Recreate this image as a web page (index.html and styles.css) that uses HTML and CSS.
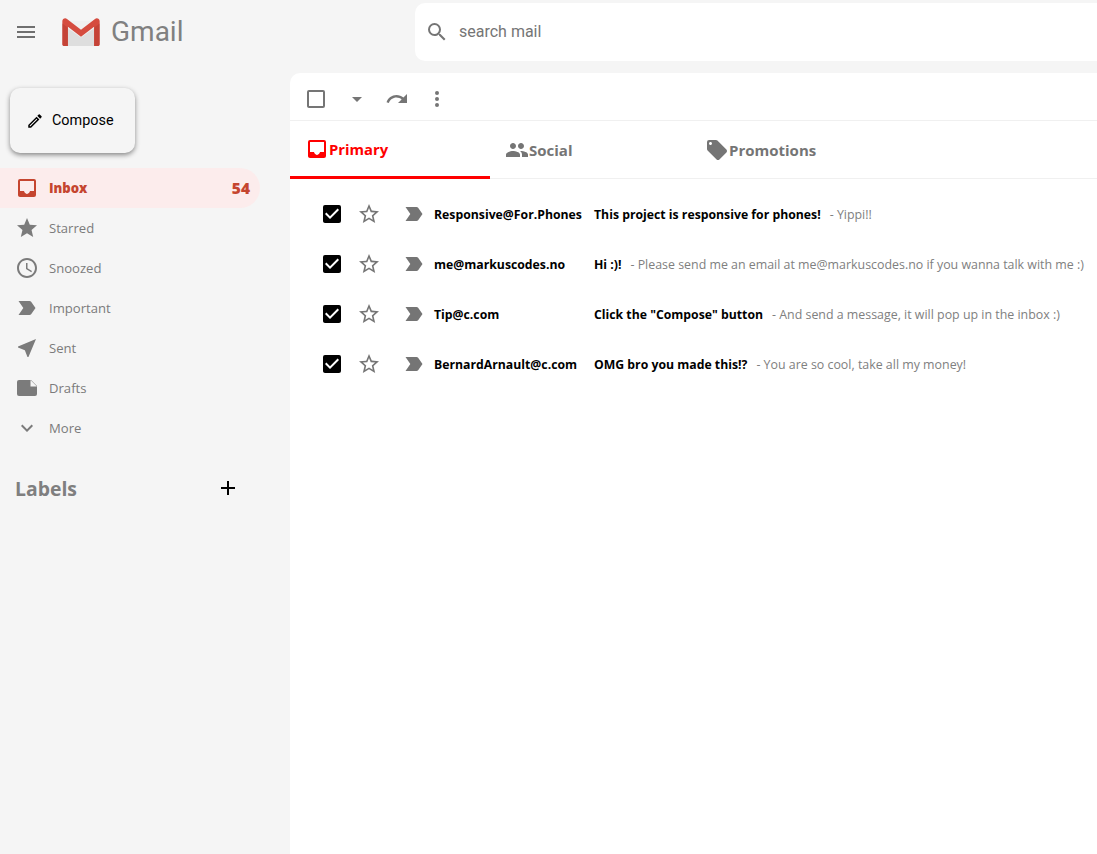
FILE: index.html
```html
<!DOCTYPE html>
<html lang="en">
<head>
<meta charset="UTF-8">
<meta name="viewport" content="width=device-width, initial-scale=1.0">
<title>Gmail</title>
<link rel="stylesheet" href="styles.css">
</head>
<body>
<header class="topbar">
    <div class="brand">
        <svg class="menu-icon" viewBox="0 0 24 24"><path d="M3 18h18v-2H3v2zm0-5h18v-2H3v2zm0-7v2h18V6H3z"/></svg>
        <svg class="logo" viewBox="0 0 40 30">
            <path fill="#f0f0f0" d="M4 3h32v27H4z"/>
            <path fill="#dedede" d="M6 30V11l14 10 14-10v19z"/>
            <path fill="#d54c3f" d="M0 3.500C0 .8 3-.6 5 1l15 11.500L35 1c2-1.600 5-.2 5 2.500V28c0 1.100-.9 2-2 2h-4V9.500L20 20 6 9.500V30H2c-1.100 0-2-.9-2-2z"/>
            <path fill="#b23a2e" d="M0 6l6 4.500V30H2c-1.100 0-2-.9-2-2zM40 6l-6 4.500V30h4c1.100 0 2-.9 2-2z" opacity=".45"/>
        </svg>
        <span class="logo-text">Gmail</span>
    </div>
    <div class="search">
        <svg class="search-icon" viewBox="0 0 24 24"><path d="M15.500 14h-.79l-.28-.27A6.470 6.470 0 0 0 16 9.500 6.500 6.500 0 1 0 9.500 16c1.610 0 3.090-.59 4.230-1.570l.27.28v.79l5 4.990L20.490 19l-4.990-5zm-6 0C7.010 14 5 11.990 5 9.500S7.010 5 9.500 5 14 7.010 14 9.500 11.990 14 9.500 14z"/></svg>
        <span class="search-text">search mail</span>
    </div>
</header>

<div class="layout">
    <aside class="sidebar">
        <button class="compose">
            <svg class="compose-icon" viewBox="0 0 24 24"><path d="M3 17.250V21h3.750L17.810 9.940l-3.750-3.750L3 17.250zM5.920 19H5v-.92l9.060-9.060.92.92L5.920 19zM20.710 5.630l-2.340-2.340a1 1 0 0 0-1.410 0l-1.830 1.830 3.750 3.750 1.830-1.830a1 1 0 0 0 0-1.410z"/></svg>
            <span class="compose-text">Compose</span>
        </button>
        <nav class="nav">
            <a class="nav-item active">
                <svg viewBox="0 0 24 24"><path d="M19 3H5a2 2 0 0 0-2 2v14c0 1.100.9 2 2 2h14a2 2 0 0 0 2-2V5a2 2 0 0 0-2-2zm0 12h-4c0 1.660-1.350 3-3 3s-3-1.340-3-3H5V5h14v10z"/><path d="M5 15h4c0 1.660 1.350 3 3 3s3-1.340 3-3h4v4H5z"/></svg>
                <span class="nav-label">Inbox</span>
                <span class="nav-count">54</span>
            </a>
            <a class="nav-item">
                <svg viewBox="0 0 24 24"><path d="M12 17.270L18.180 21l-1.640-7.030L22 9.240l-7.190-.61L12 2 9.190 8.630 2 9.240l5.460 4.730L5.820 21z"/></svg>
                <span class="nav-label">Starred</span>
            </a>
            <a class="nav-item">
                <svg viewBox="0 0 24 24"><path d="M11.990 2C6.470 2 2 6.480 2 12s4.470 10 9.990 10C17.520 22 22 17.520 22 12S17.520 2 11.990 2zM12 20c-4.420 0-8-3.580-8-8s3.580-8 8-8 8 3.580 8 8-3.580 8-8 8zm.5-13H11v6l5.250 3.150.75-1.230-4.500-2.670z"/></svg>
                <span class="nav-label">Snoozed</span>
            </a>
            <a class="nav-item">
                <svg viewBox="0 0 24 24"><path d="M3.500 18.990l11 .01c.67 0 1.270-.33 1.630-.84L20.500 12l-4.370-6.160A2 2 0 0 0 14.500 5l-11 .01L8.340 12 3.500 18.990z"/></svg>
                <span class="nav-label">Important</span>
            </a>
            <a class="nav-item">
                <svg viewBox="0 0 24 24"><path d="M21 3L3 10.530v.98l6.840 2.650L12.480 21h.98L21 3z"/></svg>
                <span class="nav-label">Sent</span>
            </a>
            <a class="nav-item">
                <svg viewBox="0 0 24 24"><path d="M4 4h12l6 6v8a2 2 0 0 1-2 2H4a2 2 0 0 1-2-2V6a2 2 0 0 1 2-2z"/><path fill="#f5f5f5" d="M15.500 4l6.500 6.500h-6.500z"/></svg>
                <span class="nav-label">Drafts</span>
            </a>
            <a class="nav-item">
                <svg viewBox="0 0 24 24"><path d="M16.590 8.590L12 13.170 7.410 8.590 6 10l6 6 6-6z"/></svg>
                <span class="nav-label">More</span>
            </a>
        </nav>
        <div class="labels">
            <h3>Labels</h3>
            <svg class="plus-icon" viewBox="0 0 24 24"><path d="M19 13h-6v6h-2v-6H5v-2h6V5h2v6h6v2z"/></svg>
        </div>
    </aside>

    <main class="mail">
        <div class="toolbar">
            <svg class="tool-box" viewBox="0 0 24 24"><path d="M19 5v14H5V5h14m0-2H5a2 2 0 0 0-2 2v14c0 1.100.9 2 2 2h14a2 2 0 0 0 2-2V5a2 2 0 0 0-2-2z"/></svg>
            <svg class="tool-arrow" viewBox="0 0 24 24"><path d="M7 10l5 5 5-5z"/></svg>
            <svg class="tool-redo" viewBox="0 0 24 24"><path d="M18.400 10.600C16.550 8.990 14.150 8 11.500 8c-4.650 0-8.580 3.030-9.960 7.220L3.900 16c1.050-3.190 4.050-5.500 7.600-5.500 1.950 0 3.730.72 5.120 1.880L13 16h9V7l-3.600 3.600z"/></svg>
            <svg class="tool-more" viewBox="0 0 24 24"><path d="M12 8a2 2 0 1 0 0-4 2 2 0 0 0 0 4zm0 2a2 2 0 1 0 0 4 2 2 0 0 0 0-4zm0 6a2 2 0 1 0 0 4 2 2 0 0 0 0-4z"/></svg>
        </div>

        <div class="tabs">
            <div class="tab active">
                <svg viewBox="0 0 24 24"><path d="M19 3H5a2 2 0 0 0-2 2v14c0 1.100.9 2 2 2h14a2 2 0 0 0 2-2V5a2 2 0 0 0-2-2zm0 12h-4c0 1.660-1.350 3-3 3s-3-1.340-3-3H5V5h14v10z"/><path d="M5 15h4c0 1.660 1.350 3 3 3s3-1.340 3-3h4v4H5z"/></svg>
                Primary
            </div>
            <div class="tab">
                <svg viewBox="0 0 24 24"><path d="M16 11c1.660 0 2.990-1.340 2.990-3S17.660 5 16 5c-1.660 0-3 1.340-3 3s1.340 3 3 3zm-8 0c1.660 0 2.990-1.340 2.990-3S9.660 5 8 5C6.340 5 5 6.340 5 8s1.340 3 3 3zm0 2c-2.330 0-7 1.170-7 3.500V19h14v-2.500c0-2.330-4.670-3.500-7-3.500zm8 0c-.29 0-.62.020-.97.050 1.160.84 1.970 1.970 1.970 3.450V19h6v-2.500c0-2.330-4.670-3.500-7-3.500z"/></svg>
                Social
            </div>
            <div class="tab">
                <svg viewBox="0 0 24 24"><path d="M21.410 11.580l-9-9C12.050 2.220 11.550 2 11 2H4a2 2 0 0 0-2 2v7c0 .55.220 1.050.59 1.420l9 9c.36.360.86.580 1.410.580s1.050-.22 1.410-.59l7-7c.37-.36.590-.86.590-1.410s-.23-1.060-.59-1.420zM5.500 7C4.670 7 4 6.330 4 5.500S4.670 4 5.500 4 7 4.670 7 5.500 6.330 7 5.500 7z"/></svg>
                Promotions
            </div>
        </div>

        <ul class="messages">
            <li class="message">
                <svg class="check" viewBox="0 0 24 24"><path d="M19 3H5a2 2 0 0 0-2 2v14c0 1.100.9 2 2 2h14a2 2 0 0 0 2-2V5a2 2 0 0 0-2-2zm-9 14l-5-5 1.410-1.410L10 14.170l7.590-7.590L19 8l-9 9z"/></svg>
                <svg class="star" viewBox="0 0 24 24"><path d="M22 9.240l-7.190-.62L12 2 9.190 8.630 2 9.240l5.460 4.730L5.820 21 12 17.270 18.180 21l-1.630-7.030L22 9.240zM12 15.400l-3.760 2.270 1-4.280-3.320-2.880 4.380-.38L12 6.100l1.710 4.040 4.380.38-3.320 2.880 1 4.280L12 15.400z"/></svg>
                <svg class="mark" viewBox="0 0 24 24"><path d="M3.500 18.990l11 .01c.67 0 1.270-.33 1.630-.84L20.500 12l-4.370-6.160A2 2 0 0 0 14.500 5l-11 .01L8.340 12 3.500 18.990z"/></svg>
                <span class="sender">Responsive@For.Phones</span>
                <span class="subject">This project is responsive for phones!</span>
                <span class="snippet">- Yippi!!</span>
            </li>
            <li class="message">
                <svg class="check" viewBox="0 0 24 24"><path d="M19 3H5a2 2 0 0 0-2 2v14c0 1.100.9 2 2 2h14a2 2 0 0 0 2-2V5a2 2 0 0 0-2-2zm-9 14l-5-5 1.410-1.410L10 14.170l7.590-7.590L19 8l-9 9z"/></svg>
                <svg class="star" viewBox="0 0 24 24"><path d="M22 9.240l-7.190-.62L12 2 9.190 8.630 2 9.240l5.460 4.730L5.820 21 12 17.270 18.180 21l-1.630-7.030L22 9.240zM12 15.400l-3.760 2.270 1-4.280-3.320-2.880 4.380-.38L12 6.100l1.710 4.040 4.380.38-3.320 2.880 1 4.280L12 15.400z"/></svg>
                <svg class="mark" viewBox="0 0 24 24"><path d="M3.500 18.990l11 .01c.67 0 1.270-.33 1.630-.84L20.500 12l-4.370-6.160A2 2 0 0 0 14.500 5l-11 .01L8.340 12 3.500 18.990z"/></svg>
                <span class="sender">me@markuscodes.no</span>
                <span class="subject">Hi :)!</span>
                <span class="snippet">- Please send me an email at me@markuscodes.no if you wanna talk with me :)</span>
            </li>
            <li class="message">
                <svg class="check" viewBox="0 0 24 24"><path d="M19 3H5a2 2 0 0 0-2 2v14c0 1.100.9 2 2 2h14a2 2 0 0 0 2-2V5a2 2 0 0 0-2-2zm-9 14l-5-5 1.410-1.410L10 14.170l7.590-7.590L19 8l-9 9z"/></svg>
                <svg class="star" viewBox="0 0 24 24"><path d="M22 9.240l-7.190-.62L12 2 9.190 8.630 2 9.240l5.460 4.730L5.820 21 12 17.270 18.180 21l-1.630-7.030L22 9.240zM12 15.400l-3.760 2.270 1-4.280-3.320-2.880 4.380-.38L12 6.100l1.710 4.040 4.380.38-3.320 2.880 1 4.280L12 15.400z"/></svg>
                <svg class="mark" viewBox="0 0 24 24"><path d="M3.500 18.990l11 .01c.67 0 1.270-.33 1.630-.84L20.500 12l-4.370-6.160A2 2 0 0 0 14.500 5l-11 .01L8.340 12 3.500 18.990z"/></svg>
                <span class="sender">Tip@c.com</span>
                <span class="subject">Click the "Compose" button</span>
                <span class="snippet">- And send a message, it will pop up in the inbox :)</span>
            </li>
            <li class="message">
                <svg class="check" viewBox="0 0 24 24"><path d="M19 3H5a2 2 0 0 0-2 2v14c0 1.100.9 2 2 2h14a2 2 0 0 0 2-2V5a2 2 0 0 0-2-2zm-9 14l-5-5 1.410-1.410L10 14.170l7.590-7.590L19 8l-9 9z"/></svg>
                <svg class="star" viewBox="0 0 24 24"><path d="M22 9.240l-7.190-.62L12 2 9.190 8.630 2 9.240l5.460 4.730L5.820 21 12 17.270 18.180 21l-1.630-7.030L22 9.240zM12 15.400l-3.760 2.270 1-4.280-3.320-2.880 4.380-.38L12 6.100l1.710 4.040 4.380.38-3.320 2.880 1 4.280L12 15.400z"/></svg>
                <svg class="mark" viewBox="0 0 24 24"><path d="M3.500 18.990l11 .01c.67 0 1.270-.33 1.630-.84L20.500 12l-4.370-6.160A2 2 0 0 0 14.500 5l-11 .01L8.340 12 3.500 18.990z"/></svg>
                <span class="sender">BernardArnault@c.com</span>
                <span class="subject">OMG bro you made this!?</span>
                <span class="snippet">- You are so cool, take all my money!</span>
            </li>
        </ul>
    </main>
</div>
</body>
</html>
```

FILE: styles.css
```css
* {
    box-sizing: border-box;
}
html, body {
    height: 100%;
}
body {
    margin: 0;
    background-color: #f5f5f5;
    font-family: "Open Sans", sans-serif;
    overflow: hidden;
    display: flex;
    flex-direction: column;
}
svg {
    display: block;
    flex-shrink: 0;
    fill: currentColor;
}

/* top bar */
.topbar {
    display: flex;
    height: 73px;
    padding-top: 3px;
    flex-shrink: 0;
}
.brand {
    width: 415px;
    height: 58px;
    display: flex;
    align-items: center;
    padding-left: 14px;
}
.menu-icon {
    width: 24px;
    height: 24px;
    color: #6f6f6f;
}
.logo {
    width: 38px;
    height: 28px;
    margin-left: 24px;
}
.logo-text {
    margin-left: 11px;
    padding-bottom: 2px;
    font-family: "Roboto", sans-serif;
    font-size: 28px;
    color: #808080;
}
.search {
    flex: 1;
    height: 58px;
    background-color: #fff;
    border-radius: 10px 0 0 10px;
    display: flex;
    align-items: center;
    padding-left: 10px;
}
.search-icon {
    width: 24px;
    height: 24px;
    color: #757575;
}
.search-text {
    margin-left: 10px;
    padding-bottom: 2px;
    font-family: "Roboto", sans-serif;
    font-size: 16px;
    color: #757575;
}

.layout {
    flex: 1;
    display: flex;
    min-height: 0;
}

/* sidebar */
.sidebar {
    width: 290px;
    flex-shrink: 0;
    padding-top: 15px;
}
.compose {
    width: 125px;
    height: 65px;
    margin-left: 10px;
    display: flex;
    align-items: center;
    padding: 0 0 0 16px;
    gap: 8px;
    border: none;
    border-radius: 10px;
    background-color: #f5f5f5;
    box-shadow: 0 2px 5px rgba(0, 0, 0, .45);
    font-family: "Roboto", sans-serif;
    font-size: 14.400px;
    color: #000;
}
.compose-icon {
    width: 18px;
    height: 18px;
}
.nav {
    margin-top: 15px;
}
.nav-item {
    width: 260px;
    height: 40px;
    display: flex;
    align-items: center;
    padding: 0 10px 0 15px;
    color: #7b7b7b;
    font-size: 13.100px;
}
.nav-item svg {
    width: 24px;
    height: 24px;
}
.nav-label {
    margin-left: 10px;
}
.nav-item.active {
    background-color: #fcecec;
    border-radius: 0 20px 20px 0;
    color: #c5452f;
    font-weight: 800;
}
.nav-count {
    margin-left: auto;
    font-size: 15.500px;
}
.labels {
    width: 260px;
    display: flex;
    align-items: center;
    justify-content: space-between;
    margin-top: 20px;
    padding: 0 20px 0 15px;
    height: 40px;
}
.labels h3 {
    margin: 0;
    font-size: 19.400px;
    font-weight: 700;
    color: #7f7f7f;
}
.plus-icon {
    width: 24px;
    height: 24px;
    color: #000;
}

/* mail list */
.mail {
    flex: 1;
    background-color: #fff;
    border-radius: 10px 0 0 0;
    min-width: 0;
}
.toolbar {
    height: 48px;
    display: flex;
    align-items: center;
    padding: 4px 0 0 14px;
    color: #757575;
    border-bottom: 1px solid #f0f0f0;
}
.toolbar svg {
    width: 24px;
    height: 24px;
}
.tool-arrow {
    margin-left: 17px;
}
.tool-redo {
    margin-left: 16px;
}
.tool-more {
    margin-left: 16px;
}
.tabs {
    height: 58px;
    display: flex;
    border-bottom: 1px solid #f0f0f0;
}
.tab {
    width: 200px;
    height: 58px;
    display: flex;
    align-items: center;
    padding-left: 15px;
    font-size: 15px;
    font-weight: 700;
    color: #757575;
}
.tab svg {
    width: 24px;
    height: 24px;
}
.tab.active {
    color: #f00;
    border-bottom: 3px solid #f00;
    font-size: 14.800px;
}
.messages {
    list-style: none;
    margin: 0;
    padding: 10px 0 0;
}
.message {
    height: 50px;
    display: flex;
    align-items: center;
    font-size: 12.250px;
    white-space: nowrap;
}
.message svg {
    width: 24px;
    height: 24px;
}
.check {
    margin-left: 30px;
    color: #000;
}
.star {
    margin-left: 13px;
    color: #757575;
}
.mark {
    margin-left: 21px;
    color: #757575;
}
.sender {
    width: 160px;
    margin-left: 8px;
    font-weight: 700;
    color: #000;
}
.subject {
    font-weight: 700;
    color: #000;
}
.snippet {
    margin-left: 9px;
    font-size: 12.400px;
    color: #808080;
}
```
